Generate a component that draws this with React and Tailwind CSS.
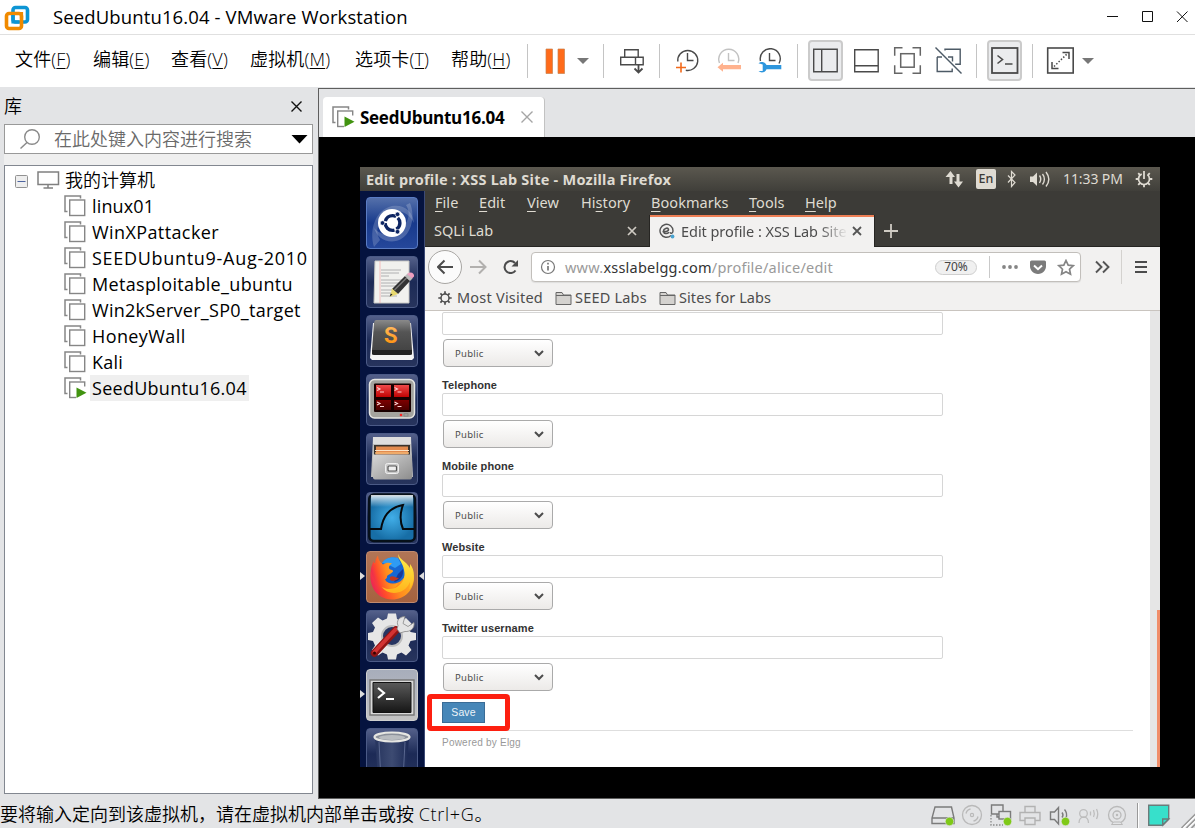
import React from 'react'

const MENUS = [
    { label: '文件', letter: 'F', width: 'w-[78px]' },
    { label: '编辑', letter: 'E', width: 'w-[78px]' },
    { label: '查看', letter: 'V', width: 'w-[79px]' },
    { label: '虚拟机', letter: 'M', width: 'w-[105px]' },
    { label: '选项卡', letter: 'T', width: 'w-[96px]' },
    { label: '帮助', letter: 'H', width: 'w-[76px]' }
]

const MACHINES = [
    { name: 'linux01', spacing: 'tracking-[0.15px]' },
    { name: 'WinXPattacker', spacing: 'tracking-[0.4px]' },
    { name: 'SEEDUbuntu9-Aug-2010', spacing: 'tracking-[0.7px]' },
    { name: 'Metasploitable_ubuntu', spacing: 'tracking-[0.34px]' },
    { name: 'Win2kServer_SP0_target', spacing: 'tracking-[0.28px]' },
    { name: 'HoneyWall', spacing: 'tracking-[0.4px]' },
    { name: 'Kali', spacing: 'tracking-[0.2px]' },
    { name: 'SeedUbuntu16.04', spacing: 'tracking-[0.27px]', running: true }
]

const FIREFOX_MENUS = [
    { label: 'File', key: 0, width: 'w-[44px]' },
    { label: 'Edit', key: 0, width: 'w-[48px]' },
    { label: 'View', key: 0, width: 'w-[54px]' },
    { label: 'History', key: 2, width: 'w-[70px]' },
    { label: 'Bookmarks', key: 0, width: 'w-[98px]' },
    { label: 'Tools', key: 0, width: 'w-[56px]' },
    { label: 'Help', key: 0, width: 'w-[40px]' }
]

const FIELDS = ['Telephone', 'Mobile phone', 'Website', 'Twitter username']

// Icons are drawn in window coordinates, the viewBox picks the right area
function Icon({ x, y, w, h, className = '', children }) {
    return (
        <svg
            width={w}
            height={h}
            viewBox={`${x} ${y} ${w} ${h}`}
            fill="none"
            className={`block shrink-0 ${className}`}
        >
            {children}
        </svg>
    )
}

function Separator({ className = '' }) {
    return <div className={`h-[34px] w-px shrink-0 bg-[#c4c4c4] ${className}`} />
}

function VmIcon({ running = false }) {
    return (
        <svg width="23" height="22" viewBox="0 0 23 22" fill="none" className="block shrink-0">
            <path d="M3.500 16.500H1V1h15.500v2.500" stroke="#868686" strokeWidth="1.500" />
            <rect x="5.700" y="5" width="15" height="15.500" fill="#fff" stroke="#868686" strokeWidth="1.400" />
            {running && (
                <>
                    <rect x="12" y="9.500" width="11" height="12.500" fill="#fff" />
                    <path d="M12.500 10.500l10 5.300-10 5.200z" fill="#419310" />
                </>
            )}
        </svg>
    )
}

function TitleBar() {
    return (
        <div className="flex h-[35px] shrink-0 items-center border-b border-[#e0e0e0] bg-white">
            <Icon x={4} y={4} w={26} h={27} className="ml-1">
                <rect x="13" y="7.500" width="14.500" height="14.500" rx="2.500" stroke="#0d95d4" strokeWidth="3.600" />
                <rect x="6.500" y="13.500" width="15" height="15" rx="2.500" stroke="#f08a00" strokeWidth="3.600" />
                <path d="M13 13.500v8.500h6" stroke="#0d95d4" strokeWidth="3.200" />
                <path d="M11 13.500h10.500v5" stroke="#f08a00" strokeWidth="3.200" />
            </Icon>
            <span className="ml-[23px] text-[18.500px] tracking-[0.12px]">SeedUbuntu16.04 - VMware Workstation</span>
            <Icon x={1104} y={8} w={91} h={18} className="ml-auto">
                <path d="M1107 16.500h11M1142.500 11.500h10v10h-10z" stroke="#111" />
                <path d="M1177 11.500l10.500 10.500M1187.500 11.500L1177 22" stroke="#111" />
            </Icon>
        </div>
    )
}

function Clock({ cx, cy, color, arc }) {
    return (
        <>
            <path d={arc} stroke={color} strokeWidth="1.400" />
            <path d={`M${cx} ${cy - 7}v7.500h6`} stroke={color} strokeWidth="1.400" />
        </>
    )
}

function Toolbar() {
    return (
        <div className="flex h-[41px] items-center">
            <Separator />
            <Icon x={545} y={47} w={21} h={26} className="ml-[17px]">
                <path d="M546 48h6.500v24.500H546zM558 48h6.500v24.500H558z" fill="#ff6b1a" stroke="#c9834f" strokeWidth=".7" />
            </Icon>
            <Icon x={577} y={57} w={12} h={8} className="ml-[11px]">
                <path d="M577 58h12l-6 6z" fill="#777" />
            </Icon>
            <Separator className="ml-[14px]" />
            <Icon x={619} y={46} w={26} h={28} className="ml-[15px]">
                <path d="M624.700 48.700h13.500v7.500h-13.500zM620.700 56.200h22.500v7.500h-22.500zM635.500 56.200v7.500" stroke="#4a4a4a" strokeWidth="1.400" />
                <path d="M638.500 64v7.500M634.500 67.500l4 4 4-4" stroke="#4a4a4a" strokeWidth="1.800" />
            </Icon>
            <Separator className="ml-[14px]" />
            <Icon x={675} y={48} w={24} h={25} className="ml-[15px]">
                <Clock cx={687.500} cy={60} color="#4a4a4a" arc="M677.800 61.500a10 10 0 1 1 8 8.800" />
                <path d="M681 62.500v10M676 67.500h10" stroke="#f26a1b" strokeWidth="1.600" />
            </Icon>
            <Icon x={717} y={48} w={25} h={25} className="ml-[18px]">
                <Clock cx={728.500} cy={60} color="#c2c2c2" arc="M719.500 63a10 10 0 1 1 18.500 0" />
                <path d="M717.500 67.300l5.500-4.500v2.300h18v4.200h-18v2.500z" fill="#ffb28e" />
            </Icon>
            <Icon x={758} y={48} w={25} h={25} className="ml-[16px]">
                <Clock cx={769.500} cy={60} color="#4a4a4a" arc="M760.500 61a10 10 0 1 1 18.500 2.500" />
                <path d="M758.500 63.300c2.500-2.300 6.500-1.800 8 1.600h14.800v4.300h-14.800c-1.500 3.600-5.500 4-8 1.900h4.200v-6.500z" fill="#2d96dd" />
            </Icon>
            <Separator className="ml-[14px]" />
            <div className="ml-[10px] flex h-[41px] w-[35px] shrink-0 items-center justify-center rounded-[4px] border-2 border-[#cbcbcb] bg-[#ebecee]">
                <Icon x={812} y={47} w={27} h={27}>
                    <path d="M813.700 49.200h23.500v22.600h-23.500zM821.700 49v23" stroke="#4a4a4a" strokeWidth="1.400" />
                </Icon>
            </div>
            <Icon x={853} y={46} w={27} h={28} className="ml-[10px]">
                <path d="M854.700 48.700h23.500v22h-23.500zM855 64.700h23" stroke="#4a4a4a" strokeWidth="1.400" />
            </Icon>
            <Icon x={893} y={46} w={29} h={29} className="ml-[13px]">
                <path d="M902.500 47.700h-7.800v8M912.500 47.700h7.800v8M902.500 73.200h-7.800v-8M912.500 73.200h7.800v-8" stroke="#666" strokeWidth="1.500" />
                <rect x="900.700" y="53.700" width="13.500" height="13.500" stroke="#666" strokeWidth="1.500" />
            </Icon>
            <Icon x={934} y={46} w={29} h={29} className="ml-[12px]">
                <path d="M945 50.500v-1.200h15.200v15h-5M937 57h5M937.200 57v14.500h15v-3M948 57h4.500v4.500" stroke="#4d5a66" strokeWidth="1.400" />
                <path d="M935.500 47.500l26 26" stroke="#4d5a66" strokeWidth="1.400" />
            </Icon>
            <Separator className="ml-[13px]" />
            <div className="ml-[10px] flex h-[41px] w-[35px] shrink-0 items-center justify-center rounded-[4px] border-2 border-[#cbcbcb] bg-[#ebecee]">
                <Icon x={990} y={46} w={29} h={29}>
                    <rect x="992" y="48" width="25.500" height="25" stroke="#4a4a4a" strokeWidth="1.800" />
                    <path d="M997.500 55.500l5 4-5 4M1005 64h7.500" stroke="#4a4a4a" strokeWidth="1.600" />
                </Icon>
            </div>
            <Separator className="ml-[10px]" />
            <Icon x={1046} y={46} w={29} h={29} className="ml-[13px]">
                <rect x="1047.700" y="48" width="25.500" height="25" stroke="#4a4a4a" strokeWidth="1.600" />
                <path d="M1062.500 52.500h6.500v6.500M1052 62v6.500h6.500" stroke="#4a4a4a" strokeWidth="1.500" />
                <path d="M1054 66.500l13-12.500" stroke="#4a4a4a" strokeWidth="1.500" strokeDasharray="1.500 1.700" />
            </Icon>
            <Icon x={1082} y={57} w={12} h={8} className="ml-[7px]">
                <path d="M1082 58h12l-6 6z" fill="#777" />
            </Icon>
        </div>
    )
}

function MenuBar() {
    return (
        <div className="flex h-[52px] shrink-0 items-center bg-white pb-px pl-[15px]">
            {MENUS.map((menu) => (
                <span key={menu.letter} className={`mb-[3px] shrink-0 text-[18px] font-[350] tracking-[0.15px] whitespace-nowrap ${menu.width}`}>
                    {menu.label}(<span className="underline decoration-1 underline-offset-2">{menu.letter}</span>)
                </span>
            ))}
            <Toolbar />
        </div>
    )
}

function Library() {
    return (
        <div className="flex w-[318px] shrink-0 flex-col pr-[5px] pl-1">
            <div className="flex h-[37px] items-center justify-between pt-px">
                <span className="text-[18px] font-[350]">库</span>
                <Icon x={290} y={100} w={13} h={13} className="mr-[10px]">
                    <path d="M291.500 101.500l10 10M301.500 101.500l-10 10" stroke="#111" strokeWidth="1.400" />
                </Icon>
            </div>
            <div className="flex h-[30px] items-center border border-[#999] bg-white">
                <Icon x={19} y={128} w={22} h={22} className="ml-[14px]">
                    <circle cx="32" cy="137" r="7.300" stroke="#8a8a8a" strokeWidth="1.400" />
                    <path d="M27 142.500l-6.500 6" stroke="#8a8a8a" strokeWidth="1.500" />
                </Icon>
                <span className="ml-[13px] text-[18px] font-[350] text-[#6a6a6a]">在此处键入内容进行搜索</span>
                <Icon x={291} y={134} w={17} h={10} className="mr-[4px] ml-auto">
                    <path d="M291.500 135h16l-8 8.500z" fill="#000" />
                </Icon>
            </div>
            <div className="h-[11px] bg-[#efefef]" />
            <div className="h-[629px] border border-[#828790] bg-white pt-px text-[18px]">
                <div className="flex h-[26px] items-center">
                    <Icon x={15} y={174} w={13} h={14} className="mt-px ml-[10px]">
                        <rect x="15.500" y="175.500" width="12" height="12" rx="1" fill="#eee" stroke="#929292" />
                        <path d="M17.500 181.500h8" stroke="#4d64a0" />
                    </Icon>
                    <Icon x={36} y={171} w={24} h={20} className="ml-[8px]">
                        <path d="M38 173h20.500v12.500H38zM48 186v2.500M43.500 189h9.500" stroke="#808080" strokeWidth="1.500" />
                    </Icon>
                    <span className="ml-[5px] font-[350]">我的计算机</span>
                </div>
                {MACHINES.map((vm) => (
                    <div key={vm.name} className="flex h-[26px] items-center pl-[59px]">
                        <VmIcon running={vm.running} />
                        <span
                            className={`ml-[3px] flex h-[26px] items-center px-[2px] whitespace-nowrap ${vm.spacing} ${vm.running ? 'bg-[#efefef]' : ''}`}
                        >
                            {vm.name}
                        </span>
                    </div>
                ))}
            </div>
        </div>
    )
}

function Tile({ className = 'border-[#4b5a86] bg-gradient-to-b from-[#54608a] via-[#1c2a56] to-[#27345d]', children }) {
    return (
        <div className={`h-[52px] w-[52px] shrink-0 overflow-hidden rounded-[4px] border ${className}`}>
            <svg width="50" height="50" viewBox="1 1 50 50" fill="none" className="block">
                {children}
            </svg>
        </div>
    )
}

function Launcher() {
    return (
        <div className="relative flex w-[65px] shrink-0 flex-col gap-[7px] overflow-hidden border-r border-[#3c4a76] bg-[#05133f] pt-[6px] pl-[6px]">
            <svg width="0" height="0" className="absolute">
                <defs>
                    <linearGradient id="metal" x1="0" y1="0" x2="1" y2="1">
                        <stop offset="0" stopColor="#d6d6d6" />
                        <stop offset="1" stopColor="#8d8d8d" />
                    </linearGradient>
                    <linearGradient id="keycap" x1="0" y1="0" x2="0" y2="1">
                        <stop offset="0" stopColor="#8a8a8a" />
                        <stop offset=".4" stopColor="#555" />
                        <stop offset="1" stopColor="#444" />
                    </linearGradient>
                    <linearGradient id="screen" x1="0" y1="0" x2="0" y2="1">
                        <stop offset="0" stopColor="#ef4b4b" />
                        <stop offset=".5" stopColor="#c00000" />
                        <stop offset=".51" stopColor="#8a0000" />
                        <stop offset="1" stopColor="#4a0000" />
                    </linearGradient>
                    <linearGradient id="sublime" x1="0" y1="0" x2="0" y2="1">
                        <stop offset="0" stopColor="#ffc06a" />
                        <stop offset="1" stopColor="#ff8a00" />
                    </linearGradient>
                    <radialGradient id="shark">
                        <stop offset="0" stopColor="#41aee8" />
                        <stop offset="1" stopColor="#176ea6" />
                    </radialGradient>
                    <linearGradient id="shine" x1="0" y1="0" x2="0" y2="1">
                        <stop offset="0" stopColor="#fff" stopOpacity=".85" />
                        <stop offset="1" stopColor="#fff" stopOpacity="0" />
                    </linearGradient>
                    <linearGradient id="fox" x1=".9" y1=".3" x2="0" y2=".6">
                        <stop offset="0" stopColor="#ffb01f" />
                        <stop offset=".4" stopColor="#ff8a1f" />
                        <stop offset=".75" stopColor="#ff4a2c" />
                        <stop offset="1" stopColor="#e8205c" />
                    </linearGradient>
                    <linearGradient id="tail" x1="0" y1="0" x2="0" y2="1">
                        <stop offset="0" stopColor="#fff04a" />
                        <stop offset="1" stopColor="#ffb41c" />
                    </linearGradient>
                    <linearGradient id="terminal" x1="0" y1="0" x2="0" y2="1">
                        <stop offset="0" stopColor="#5a5a5a" />
                        <stop offset="1" stopColor="#161616" />
                    </linearGradient>
                    <linearGradient id="glass" x1="0" y1="0" x2="1" y2="0">
                        <stop offset="0" stopColor="#26345e" />
                        <stop offset=".5" stopColor="#3d4b72" />
                        <stop offset="1" stopColor="#1c2a56" />
                    </linearGradient>
                </defs>
            </svg>

            {/* Dash */}
            <Tile className="border-[#5a7cc4] bg-gradient-to-b from-[#5570aa] via-[#183a8c] to-[#25479b]">
                <path d="M8 50C3 33 9 13 26 9c12-2 21 5 22 17-6-12-18-15-27-9C11 24 9 35 14 43z" fill="#fff" opacity=".18" />
                <path d="M44 6c6 14 1 35-14 38-11 2-19-4-22-13 7 8 18 9 26 2 9-8 11-17 6-25z" fill="#fff" opacity=".2" />
                <circle cx="26" cy="26" r="14" fill="#fff" />
                <circle cx="26.500" cy="26" r="7.400" stroke="#0d2563" strokeWidth="3.400" strokeDasharray="13.500 2" strokeDashoffset="6" />
                <circle cx="16.500" cy="26" r="2.300" fill="#0d2563" stroke="#fff" strokeWidth=".6" />
                <circle cx="31.500" cy="17.300" r="2.300" fill="#0d2563" stroke="#fff" strokeWidth=".6" />
                <circle cx="31.500" cy="34.700" r="2.300" fill="#0d2563" stroke="#fff" strokeWidth=".6" />
            </Tile>

            {/* Text editor */}
            <Tile>
                <path d="M9 5h34v42H8z" fill="#f1f1ee" stroke="#c9c9c5" />
                <path d="M14 5v42" stroke="#f3a6a6" strokeWidth=".7" />
                <path d="M15 14h20M15 17h18M15 20h8M15 24h21M15 27h18M15 30h16M15 34h19M15 37h10M15 40h16" stroke="#a9a9a9" strokeWidth=".9" />
                <path d="M26 33l13-13 5 5-12 13z" fill="#333" />
                <path d="M28.500 34l13-13" stroke="#777" strokeWidth="1.500" />
                <path d="M26 32.500l6 5.500-8 3z" fill="#e8d96e" />
                <path d="M26.500 38.500l-2.800 2.300 1-3.300z" fill="#222" />
                <path d="M39 20l2.500-2.500 5 5-2.500 2.500z" fill="#bbb" />
                <path d="M41 18l2.500-1.500c3-.5 5 1.500 4.500 4L46 22.500z" fill="#ee9ec0" />
            </Tile>

            {/* Sublime */}
            <Tile>
                <path d="M7 8h38l3 35-2 2H6l-2-2z" fill="#f4f4f4" />
                <path d="M10 5h32q2 0 2.300 3L46 35H6L8 8q.3-3 2-3z" fill="url(#keycap)" />
                <path d="M6 35h40v4q0 1-2 1H8q-2 0-2-1z" fill="#222" />
                <text x="18" y="28" fontSize="22" fontWeight="700" fontFamily="Roboto" fill="url(#sublime)">S</text>
            </Tile>

            {/* Terminator */}
            <Tile>
                <rect x="3.500" y="5.500" width="45" height="38.500" rx="5" fill="#a3a39e" stroke="#e6e6e2" strokeWidth="1.500" />
                <rect x="8" y="9.500" width="37" height="28.500" rx="1" fill="#190000" />
                <path d="M10 11h15v12H10zM28 11h15v12H28zM10 26h15v10H10zM28 26h15v10H28z" fill="url(#screen)" />
                <path d="M11 13.500l3 1.500-3 1.500M14 18h4M28.500 13.500l3 1.500-3 1.500M31.500 18h4M11 28l3 1.500-3 1.500M14 32.500h4M28.500 28l3 1.500-3 1.500M31.500 32.500h4" stroke="#fbd0d0" strokeWidth="1.100" />
                <circle cx="35" cy="41" r="1.300" fill="#f22" />
                <rect x="38" y="39.800" width="4" height="2.300" stroke="#777" strokeWidth=".6" />
            </Tile>

            {/* Files */}
            <Tile>
                <path d="M7 4h38l2 40H5z" fill="#bdbdbd" />
                <path d="M7 4h38v7H7z" fill="#dedede" />
                <path d="M8 12h36v10H8z" fill="#3a332c" />
                <path d="M10 13.500h32v8H10z" fill="#e28b4f" />
                <path d="M9 17.500h34" stroke="#fbe3c6" strokeWidth="1.200" />
                <path d="M9 20h34" stroke="#f3b673" strokeWidth="1.400" />
                <path d="M7 21.500h39v23q0 2-2 2H9q-2 0-2-2z" fill="url(#metal)" />
                <rect x="19.500" y="30.500" width="13" height="10" rx="2" fill="#c9c9c9" stroke="#f0f0f0" />
                <rect x="22" y="33" width="8.500" height="5" rx="1" fill="#eee" stroke="#555" strokeWidth="1.200" />
            </Tile>

            {/* Wireshark */}
            <Tile>
                <rect x="3.300" y="2.500" width="45.500" height="46.500" rx="4.500" fill="url(#shark)" stroke="#061019" strokeWidth="2.600" />
                <path d="M5 3h42v12H5z" fill="url(#shine)" />
                <path d="M4 37h11c2-12 7-21 22-24-3 8-3 17 0 24h11" stroke="#05090d" strokeWidth="2" />
            </Tile>

            {/* Firefox */}
            <Tile className="border-[#c08a6e] bg-gradient-to-b from-[#b17556] to-[#a5623f]">
                <path d="M5 18c-3 15 4 30 21 30.500 13 0 22-10 22-22L40 12H8z" fill="url(#fox)" />
                <circle cx="27" cy="19.500" r="13" fill="#1767d2" />
                <path d="M16 12c3-5 10-7 16-5l3 6-6 4-8-4z" fill="#2f9bf3" />
                <path d="M28 31c6-1 10-6 9-13l-5 5z" fill="#173a9a" />
                <path
                    d="M5 20c0-4 1-7 3-10 0 2 0 3 1 4 0-4 1-7 3-9.500 0 4 2 7 5 9 3-2 6-2 9-1-3 2-4 4-2 6 2 .5 3.500.5 3 2-1 2-5 3-6 4.500.5 2-1 3-2 3.500 2 4 7 6 13 4-2 5-10 9-16 5-6-4-9-11-11-17.500z"
                    fill="url(#fox)"
                />
                <path d="M24 26c3-2 5 1 9 1-2 2-5 4-9 2z" fill="#c2361c" />
                <path d="M32 3c0 5 5 9 6 16 2 8-2 15-9 18-5 2-10 1-13-1 6 9 23 8 28-5 0 3 0 5-1 8 7-9 6-20 1-26l0 4c-3-6-10-8-12-14z" fill="url(#tail)" />
            </Tile>

            {/* Settings */}
            <Tile>
                <path
                    d="M22 3.500h8l1 5.500 4.500 2L40 8l5.500 5.500-3 4.500 2 4 5.500 1v7l-5.500 1-2 4.500 3 4.500-5.500 5.500-4.500-3-4.500 2-1 5h-8l-1-5-4.500-2-4.500 3L6 40l3-4.500L7 31l-5-1v-7l5-1 2-4.500-3-4.500L12 7.500l4.500 3 4.500-2z"
                    fill="#e6e6e6"
                />
                <circle cx="26" cy="26" r="10" fill="#263461" stroke="#bdbdbd" strokeWidth="2" />
                <path d="M8.500 43L30 20" stroke="#8f1414" strokeWidth="7.500" strokeLinecap="round" />
                <path d="M8.500 42L29.500 19.500" stroke="#d23333" strokeWidth="4" strokeLinecap="round" />
                <circle cx="8.500" cy="43" r="1.500" fill="#300" />
                <path d="M31 19l3 4 5-1.500c5 .5 10-3 9-9l-6 4-5-3 2-7c-6 0-9 5-7 9z" fill="#e4e4e4" stroke="#888" strokeWidth=".8" />
            </Tile>

            {/* Terminal */}
            <Tile className="border-[#cfcfcf] bg-gradient-to-b from-[#a7adbb] to-[#c2c2c2]">
                <path d="M4 11h44v35H4z" fill="#d9d9d9" stroke="#777" strokeWidth="1.400" />
                <path d="M7 13.500h38v30H7z" fill="url(#terminal)" stroke="#111" />
                <path d="M12 19l6 5-6 5M20 30h8" stroke="#fff" strokeWidth="2.200" />
            </Tile>

            {/* Trash */}
            <Tile>
                <path d="M9 9l3 43h28l3-43z" fill="url(#glass)" />
                <path d="M13 14l2 38M39 14l-2 38" stroke="#66739a" strokeWidth=".8" />
                <ellipse cx="26" cy="9" rx="17.500" ry="4.500" fill="#8b909a" stroke="#e6e6e2" strokeWidth="2.200" />
                <ellipse cx="26" cy="9.500" rx="13" ry="2.500" fill="#b9bcc0" />
            </Tile>

            {/* Running and focused markers */}
            <div className="absolute top-[381px] left-0 border-y-4 border-l-[5px] border-y-transparent border-l-[#dcdcdc]" />
            <div className="absolute top-[381px] right-0 border-y-4 border-r-[5px] border-y-transparent border-r-[#dcdcdc]" />
            <div className="absolute top-[499px] left-0 border-y-4 border-l-[5px] border-y-transparent border-l-[#dcdcdc]" />
        </div>
    )
}

function GuestPanel() {
    return (
        <div className="flex h-6 shrink-0 items-center bg-gradient-to-b from-[#5b584f] to-[#403f3a] pl-[6px] text-[#dfdbd2]">
            <span className="text-[14.500px] font-bold tracking-[0.24px] whitespace-nowrap">Edit profile : XSS Lab Site - Mozilla Firefox</span>
            <Icon x={945} y={171} w={19} h={17} className="ml-auto">
                <path d="M951 184v-9M958 174v9" stroke="#dfdbd2" strokeWidth="3" />
                <path d="M945.500 177l5-6 4.500 6zM954 181.500h9l-4.500 6z" fill="#dfdbd2" />
            </Icon>
            <div className="ml-[12px] flex h-5 w-5 items-center justify-center rounded-[2px] bg-[#dfdbd2] text-[12.500px] font-medium text-[#3c3b37]">En</div>
            <Icon x={1007} y={170} w={10} h={18} className="ml-[11px]">
                <path d="M1008 175.500l7 7-3.500 4v-15l3.500 3.500-7 7.500" stroke="#dfdbd2" strokeWidth="1.200" />
            </Icon>
            <Icon x={1029} y={170} w={22} h={18} className="ml-[12px]">
                <path d="M1030 176.500h3l4-4v13.500l-4-4h-3z" fill="#dfdbd2" />
                <path d="M1039.500 175.500c1.500 2 1.500 5 0 7.500M1042.500 174c2.500 3 2.500 7.500 0 10.500M1046 172c3.500 4.500 3.500 10 0 14.500" stroke="#dfdbd2" strokeWidth="1.400" />
            </Icon>
            <span className="ml-[12px] w-[61px] text-[14px] tracking-[-0.1px] whitespace-nowrap">11:33 PM</span>
            <Icon x={1135} y={170} w={18} h={18} className="mr-[7px] ml-[11px]">
                <circle cx="1144" cy="179" r="5.500" stroke="#dfdbd2" strokeWidth="1.700" strokeDasharray="22.900 6 5.660 0" />
                <path
                    d="M1149.500 179h2.800M1138.500 179h-2.800M1144 184.500v2.800M1148 183l1.800 1.800M1140 183l-1.800 1.800M1148 175l1.800-1.800M1140 175l-1.800-1.800M1144 171v8"
                    stroke="#dfdbd2"
                    strokeWidth="1.800"
                />
            </Icon>
        </div>
    )
}

function FolderIcon() {
    return (
        <svg width="17" height="15" viewBox="0 0 17 15" fill="none" className="block shrink-0">
            <path d="M1 13.500V1.500h6l1.500 2.500h7.500v9.500zM1 4.500h15" fill="#d4d2cf" stroke="#666" />
        </svg>
    )
}

function BrowserChrome() {
    return (
        <>
            <div className="flex h-6 shrink-0 items-center bg-[#3c3b37] pb-[2px] pl-[10px] text-[14.500px] text-[#dfdbd2]">
                {FIREFOX_MENUS.map(({ label, key, width }) => (
                    <span key={label} className={`shrink-0 tracking-[0.05px] ${width}`}>
                        {label.slice(0, key)}
                        <span className="underline decoration-1 underline-offset-[3px]">{label[key]}</span>
                        {label.slice(key + 1)}
                    </span>
                ))}
            </div>
            <div className="flex h-8 shrink-0 bg-[#3c3b37] text-[14.500px]">
                <div className="flex w-[225px] items-center border-r border-b border-[#262522] pr-[12px] pl-[9px] text-[#dfdbd2]">
                    <span>SQLi Lab</span>
                    <Icon x={627} y={226} w={10} h={10} className="ml-auto">
                        <path d="M628 227l8 8M636 227l-8 8" stroke="#cfcbc3" strokeWidth="1.700" />
                    </Icon>
                </div>
                <div className="flex w-[224px] items-center border-t-2 border-[#ee7f55] bg-[#f2f1f0] pb-[2px] pl-[9px] text-[#4c4c4c]">
                    <Icon x={659} y={223} w={16} h={16}>
                        <path d="M671 235.500a6.500 6.500 0 1 1 2-4.500c0 2.500-2.500 3-3 1.300" stroke="#555" strokeWidth="1.400" />
                        <path d="M662.500 231.500c3.500.5 6.500-.5 6-2.300-.8-2-5-.8-5 2 0 2.600 3.500 3 5.500 1" stroke="#555" strokeWidth="1.600" />
                        <circle cx="672.500" cy="236.500" r="1.900" fill="#4aa3d0" />
                    </Icon>
                    <span className="ml-[6px] w-[167px] [mask-image:linear-gradient(to_right,black_138px,transparent_167px)] leading-6 tracking-[-0.05px] whitespace-nowrap">
                        Edit profile : XSS Lab Site
                    </span>
                    <Icon x={852} y={226} w={10} h={10} className="ml-[4px]">
                        <path d="M853 227l8 8M861 227l-8 8" stroke="#555" strokeWidth="1.800" />
                    </Icon>
                </div>
                <div className="flex flex-1 items-center border-b border-l border-[#262522] pl-[9px]">
                    <Icon x={884} y={223} w={14} h={14}>
                        <path d="M891 223v14M884 230h14" stroke="#cfcbc3" strokeWidth="1.800" />
                    </Icon>
                </div>
            </div>
            <div className="flex h-10 shrink-0 items-center bg-[#f2f1f0] pl-[3px]">
                <div className="flex h-[34px] w-[34px] items-center justify-center rounded-full border border-[#a8a6a3] bg-[#fbfbfb]">
                    <Icon x={437} y={259} w={17} h={16}>
                        <path d="M453 267h-15M444.500 260.500L438 267l6.500 6.500" stroke="#4c4c4c" strokeWidth="2" />
                    </Icon>
                </div>
                <Icon x={469} y={259} w={18} h={16} className="ml-[7px]">
                    <path d="M470 267h15M479 260.500l6.500 6.500-6.500 6.500" stroke="#b2b0ae" strokeWidth="2" />
                </Icon>
                <Icon x={502} y={258} w={18} h={18} className="ml-[15px]">
                    <path d="M515.500 270.500a6 6 0 1 1-.5-7.500" stroke="#4c4c4c" strokeWidth="2.100" />
                    <path d="M518 260v6.500h-6.500z" fill="#4c4c4c" />
                </Icon>
                <div className="ml-[11px] flex h-[30px] w-[550px] items-center rounded-[4px] border border-[#c2bfbb] bg-white text-[14.500px] text-[#9a9a9a] shadow-[0_1px_1px_rgba(0,0,0,0.08)]">
                    <Icon x={540} y={259} w={16} h={16} className="ml-[8px]">
                        <circle cx="548" cy="267" r="6.500" stroke="#777" strokeWidth="1.200" />
                        <path d="M548 266v4.500M548 262.800v1.800" stroke="#777" strokeWidth="1.700" />
                    </Icon>
                    <span className="ml-[9px] tracking-[0.22px] whitespace-nowrap">
                        www.<span className="text-[#333]">xsslabelgg.com</span>/profile/alice/edit
                    </span>
                    <span className="ml-auto flex h-[15px] w-[42px] items-center justify-center rounded-full border border-[#cfcfcf] bg-[#f0f0f0] text-[12px] text-[#444]">
                        70%
                    </span>
                    <div className="ml-[12px] h-[22px] w-px bg-[#c9c9c9]" />
                    <Icon x={1001} y={259} w={74} h={17} className="mr-[5px] ml-[11px]">
                        <circle cx="1004" cy="267" r="1.900" fill="#858585" />
                        <circle cx="1010" cy="267" r="1.900" fill="#858585" />
                        <circle cx="1016" cy="267" r="1.900" fill="#858585" />
                        <path d="M1031.500 260.500h13q1.500 0 1.500 1.500v4c0 4-3 8-8 8s-8-4-8-8v-4q0-1.500 1.500-1.500z" fill="#7b7b7b" />
                        <path d="M1034 265.500l4 3.700 4-3.700" stroke="#fff" strokeWidth="2" />
                        <path d="M1066 260.500l2.200 4.600 5 .6-3.700 3.500 1 5-4.500-2.500-4.500 2.500 1-5-3.700-3.500 5-.6z" stroke="#858585" strokeWidth="1.700" />
                    </Icon>
                </div>
                <Icon x={1095} y={260} w={16} h={14} className="ml-[14px]">
                    <path d="M1096 261.500l5.500 5.500-5.500 5.500M1103 261.500l5.500 5.500-5.500 5.500" stroke="#555" strokeWidth="1.900" />
                </Icon>
                <div className="ml-[10px] h-[34px] w-px bg-[#d4d2cf]" />
                <Icon x={1135} y={260} w={12} h={14} className="ml-[13px]">
                    <path d="M1135 262h12M1135 267h12M1135 272h12" stroke="#4c4c4c" strokeWidth="1.800" />
                </Icon>
            </div>
            <div className="flex h-6 shrink-0 items-center border-b border-[#c9c4bf] bg-[#f2f1f0] pb-px pl-[13px] text-[14.500px] whitespace-nowrap text-[#4c4c4c]">
                <Icon x={438} y={291} w={14} h={14}>
                    <circle cx="445" cy="298" r="4" stroke="#4c4c4c" strokeWidth="1.500" />
                    <path
                        d="M449 298h2.700M441 298h-2.700M445 302v2.700M445 294v-2.700M447.900 300.900l1.700 1.700M442.100 300.900l-1.700 1.700M447.900 295.100l1.700-1.700M442.100 295.100l-1.700-1.700"
                        stroke="#4c4c4c"
                        strokeWidth="1.700"
                    />
                </Icon>
                <span className="mb-px ml-[5px] w-[98px] tracking-[0.22px]">Most Visited</span>
                <FolderIcon />
                <span className="mb-px ml-[3px] w-[84px] tracking-[0.2px]">SEED Labs</span>
                <FolderIcon />
                <span className="mb-px ml-[3px] tracking-[0.08px]">Sites for Labs</span>
            </div>
        </>
    )
}

function Field({ label }) {
    return (
        <div className="mb-[10px] font-['Liberation_Sans',sans-serif]">
            {label && <div className="h-4 text-[11px] leading-4 font-bold tracking-[0.1px] text-[#333]">{label}</div>}
            <div className="h-[23px] w-[501px] rounded-[2px] border border-[#d6d6d6] bg-white" />
            <div className="mt-1 ml-px flex h-[28px] w-[110px] items-center justify-between rounded-[4px] border border-[#aaa] bg-gradient-to-b from-white to-[#eceae8] pr-[8px] pl-[11px] font-['Noto_Sans',sans-serif] text-[9.500px] tracking-[0.3px] text-[#4c4c4c]">
                <span className="mt-px">Public</span>
                <svg width="10" height="7" viewBox="0 0 10 7" fill="none">
                    <path d="M1 1l4 4 4-4" stroke="#4c4c4c" strokeWidth="2" />
                </svg>
            </div>
        </div>
    )
}

function ProfilePage() {
    return (
        <div className="relative flex min-h-0 flex-1 bg-white">
            <div className="w-[725px] pt-px pl-[17px] font-['Liberation_Sans',sans-serif]">
                <Field />
                {FIELDS.map((label) => (
                    <Field key={label} label={label} />
                ))}
                <div className="mt-[11px] flex h-[21px] w-[43px] items-center justify-center border border-[#3a6c96] bg-[#4787b8] text-[10.500px] tracking-[0.1px] text-[#eef4f9]">
                    Save
                </div>
                <div className="mt-[7px] w-[691px] border-t border-[#dedede] pt-[5px] text-[10px] leading-[14px] tracking-[0.22px] text-[#999]">
                    Powered by Elgg
                </div>
            </div>
            <div className="flex w-[10px] justify-end bg-[#e6e6e6] pt-[299px]">
                <div className="w-[3px] bg-[#f08e6a]" />
            </div>
            {/* Highlight around the save button */}
            <div className="absolute top-[383px] left-[2px] h-[37px] w-[83px] rounded-[4px] border-[5px] border-[#fd1f10]" />
        </div>
    )
}

function Guest() {
    return (
        <div className="flex h-[600px] w-[800px] flex-col overflow-hidden font-['Noto_Sans',sans-serif]">
            <GuestPanel />
            <div className="flex min-h-0 flex-1">
                <Launcher />
                <div className="flex min-w-0 flex-1 flex-col">
                    <BrowserChrome />
                    <ProfilePage />
                </div>
            </div>
        </div>
    )
}

function Workspace() {
    return (
        <div className="mt-px flex min-w-0 flex-1 flex-col border-t border-b border-l border-[#5e5e5e] bg-black">
            <div className="flex h-12 shrink-0 items-end bg-[#e3e4e6] pl-[4px]">
                <div className="flex h-10 w-[222px] items-center rounded-t-[4px] border-r border-[#c2c2c2] bg-white pl-[9px]">
                    <VmIcon running />
                    <span className="ml-[5px] text-[17px] font-bold tracking-[-0.27px] whitespace-nowrap">SeedUbuntu16.04</span>
                    <Icon x={519} y={111} w={14} h={14} className="mr-[10px] ml-auto">
                        <path d="M520.500 112.500l11 11M531.500 112.500l-11 11" stroke="#a5a5a5" strokeWidth="1.400" />
                    </Icon>
                </div>
            </div>
            <div className="flex-1 pt-[30px] pl-[41px]">
                <Guest />
            </div>
        </div>
    )
}

function StatusBar() {
    return (
        <div className="flex h-[29px] shrink-0 items-center">
            <span className="text-[18px] font-[350] whitespace-nowrap">
                要将输入定向到该虚拟机，请在虚拟机内部单击或按 <span className="tracking-[0.7px]">Ctrl+G</span>。
            </span>
            <Icon x={930} y={803} w={265} h={25} className="mt-1 ml-auto">
                {/* hard disk */}
                <path d="M935 807h16.500l2.500 11v5.500h-22V818zM932 818h22" stroke="#7b7b7b" strokeWidth="1.400" />
                <circle cx="949.500" cy="821.500" r="4.200" fill="#7fc918" stroke="#e3e4e6" strokeWidth=".6" />
                {/* optical disc */}
                <circle cx="972" cy="815" r="9.500" stroke="#b9b9b9" strokeWidth="1.300" />
                <circle cx="972" cy="815" r="1.600" stroke="#b9b9b9" strokeWidth="1.200" />
                <path d="M966 813.500c.5-2.500 2-4 4.500-4.500M978 816.500c-.5 2.500-2 4-4.500 4.500" stroke="#b9b9b9" strokeWidth="1.300" />
                {/* network */}
                <path d="M991.500 805h11.500v9h-11.500zM997 814v3h3" stroke="#7b7b7b" strokeWidth="1.400" />
                <rect x="999" y="811.500" width="11.500" height="7.500" fill="#e3e4e6" stroke="#7b7b7b" strokeWidth="1.400" />
                <path d="M991 815v10h12" stroke="#8a8a8a" strokeWidth="1.300" strokeDasharray="1.500 1.500" />
                <circle cx="1007.500" cy="821.500" r="4.200" fill="#7fc918" stroke="#e3e4e6" strokeWidth=".6" />
                {/* printer */}
                <path d="M1025 812.500v-6h10v6M1024.500 820.500H1020v-8h20v8h-4.500M1025 818h10v6.500h-10z" stroke="#b2b2b2" strokeWidth="1.400" />
                {/* sound */}
                <path d="M1050.500 812h4l4-4.500v16.500l-4-4.500h-4z" stroke="#7b7b7b" strokeWidth="1.400" />
                <path d="M1062 812.500c1.200 1.500 1.200 3.500 0 5M1064.500 809.500c2.500 3 2.500 6 1.500 8.500" stroke="#7b7b7b" strokeWidth="1.400" />
                <circle cx="1065.500" cy="821.500" r="4.200" fill="#7fc918" stroke="#e3e4e6" strokeWidth=".6" />
                {/* smart card user */}
                <circle cx="1083.500" cy="813.500" r="3.800" stroke="#bdbdbd" strokeWidth="1.300" />
                <path d="M1079 823c0-8 9.500-8 9.500 0M1090.500 811.500v4M1093.500 810c1 2.500 1 5 0 7M1096.500 809c1.500 3 1.500 7 0 10" stroke="#bdbdbd" strokeWidth="1.300" />
                {/* webcam */}
                <circle cx="1117" cy="815" r="8.500" stroke="#b9b9b9" strokeWidth="1.300" />
                <circle cx="1117" cy="815" r="4" stroke="#b9b9b9" strokeWidth="1.300" />
                <circle cx="1117" cy="815" r="1.200" fill="#b9b9b9" />
                <path d="M1111.500 824.500h11l-2-2.500h-7z" fill="#e3e4e6" stroke="#b9b9b9" />
                {/* separator */}
                <path d="M1137.500 803v25" stroke="#999" />
                <path d="M1138.500 803v25" stroke="#fff" />
                {/* message log */}
                <path d="M1148.700 805.200h20v14l-6 6h-14z" fill="#37e0cb" stroke="#6b7b7a" strokeWidth="1.400" />
                <path d="M1162.700 825v-6h6z" fill="#37e0cb" stroke="#6b7b7a" strokeWidth="1.400" />
                {/* resize grip */}
                <path d="M1181.500 828l14-14M1186.500 828l9-9M1191.500 828l4-4" stroke="#999" strokeWidth="1.600" />
                <path d="M1183.500 828l12-12M1188.500 828l7-7" stroke="#fff" strokeWidth="1.200" />
            </Icon>
        </div>
    )
}

export default function App() {
    return (
        <div className="flex h-[828px] w-[1195px] flex-col overflow-hidden bg-[#e3e4e6] font-['Open_Sans','Noto_Sans_CJK_SC',sans-serif] leading-none text-black">
            <TitleBar />
            <MenuBar />
            <div className="flex h-[712px] shrink-0">
                <Library />
                <Workspace />
            </div>
            <StatusBar />
        </div>
    )
}
